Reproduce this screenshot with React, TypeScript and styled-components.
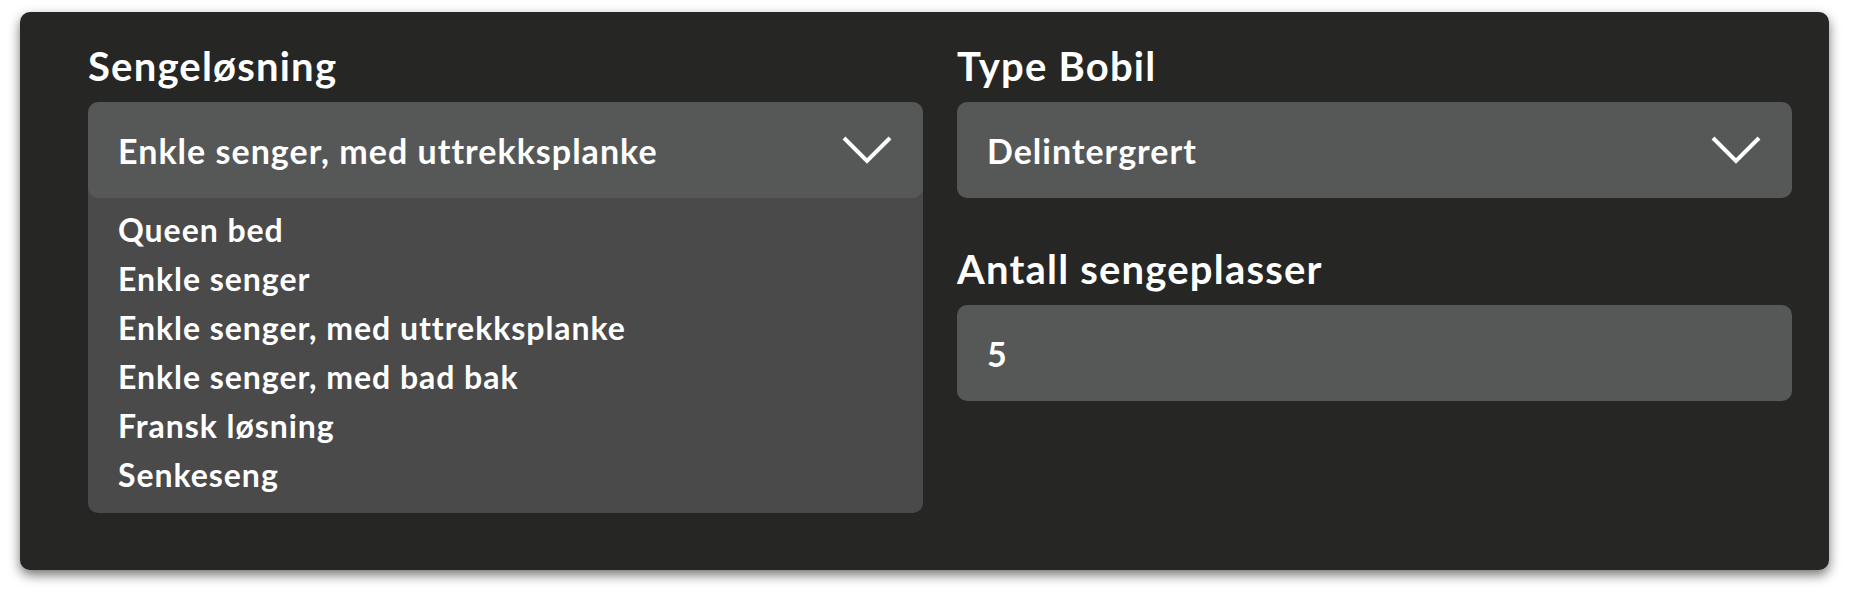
import React from "react";
import styled, { createGlobalStyle } from "styled-components";

const Global = createGlobalStyle`
  html, body { margin: 0; padding: 0; background: #ffffff; }
  body { font-family: Lato, "Open Sans", sans-serif; }
  * { box-sizing: border-box; }
`;

const Page = styled.div`
  padding: 12px 21px 30px 20px;
`;

const Card = styled.div`
  height: 558px;
  background: #262625;
  border-radius: 10px;
  box-shadow: 0 5px 12px rgba(0, 0, 0, 0.55);
  padding: 30px 37px 0 68px;
  display: grid;
  grid-template-columns: 1fr 1fr;
  column-gap: 34px;
  align-items: start;
`;

const Column = styled.div`
  display: flex;
  flex-direction: column;
  gap: 47px;
`;

const Field = styled.div`
  display: flex;
  flex-direction: column;
  gap: 12px;
`;

const Label = styled.div`
  color: #ffffff;
  font-family: Lato, sans-serif;
  font-weight: 700;
  font-size: 40px;
  line-height: 48px;
  letter-spacing: 0.03em;
`;

const SelectWrap = styled.div`
  position: relative;
`;

const Box = styled.div`
  height: 96px;
  background: #565857;
  border-radius: 10px;
  display: flex;
  align-items: center;
  justify-content: space-between;
  padding: 0 31px 0 30px;
  color: #ffffff;
  font-family: Lato, sans-serif;
  font-weight: 700;
  font-size: 34px;
  letter-spacing: 0.03em;
  position: relative;
  z-index: 1;
`;

const Menu = styled.ul`
  position: absolute;
  left: 0;
  right: 0;
  top: 86px;
  margin: 0;
  list-style: none;
  background: #4a4a4a;
  border-radius: 0 0 10px 10px;
  padding: 17px 30px 14px 30px;
`;

const Item = styled.li`
  color: #ffffff;
  font-family: Lato, sans-serif;
  font-weight: 700;
  font-size: 32px;
  line-height: 49px;
  letter-spacing: 0.03em;
`;

const Chevron = () => (
  <svg width="50" height="30" viewBox="0 0 50 30" fill="none">
    <polyline points="2,3 25,26 48,3" stroke="#ffffff" strokeWidth="4" />
  </svg>
);

const options = [
  "Queen bed",
  "Enkle senger",
  "Enkle senger, med uttrekksplanke",
  "Enkle senger, med bad bak",
  "Fransk løsning",
  "Senkeseng",
];

export default function App() {
  return (
    <>
      <Global />
      <Page>
        <Card>
          <Column>
            <Field>
              <Label>Sengeløsning</Label>
              <SelectWrap>
                <Box>
                  <span>Enkle senger, med uttrekksplanke</span>
                  <Chevron />
                </Box>
                <Menu>
                  {options.map((o) => (
                    <Item key={o}>{o}</Item>
                  ))}
                </Menu>
              </SelectWrap>
            </Field>
          </Column>
          <Column>
            <Field>
              <Label>Type Bobil</Label>
              <Box>
                <span>Delintergrert</span>
                <Chevron />
              </Box>
            </Field>
            <Field>
              <Label>Antall sengeplasser</Label>
              <Box>
                <span>5</span>
              </Box>
            </Field>
          </Column>
        </Card>
      </Page>
    </>
  );
}
